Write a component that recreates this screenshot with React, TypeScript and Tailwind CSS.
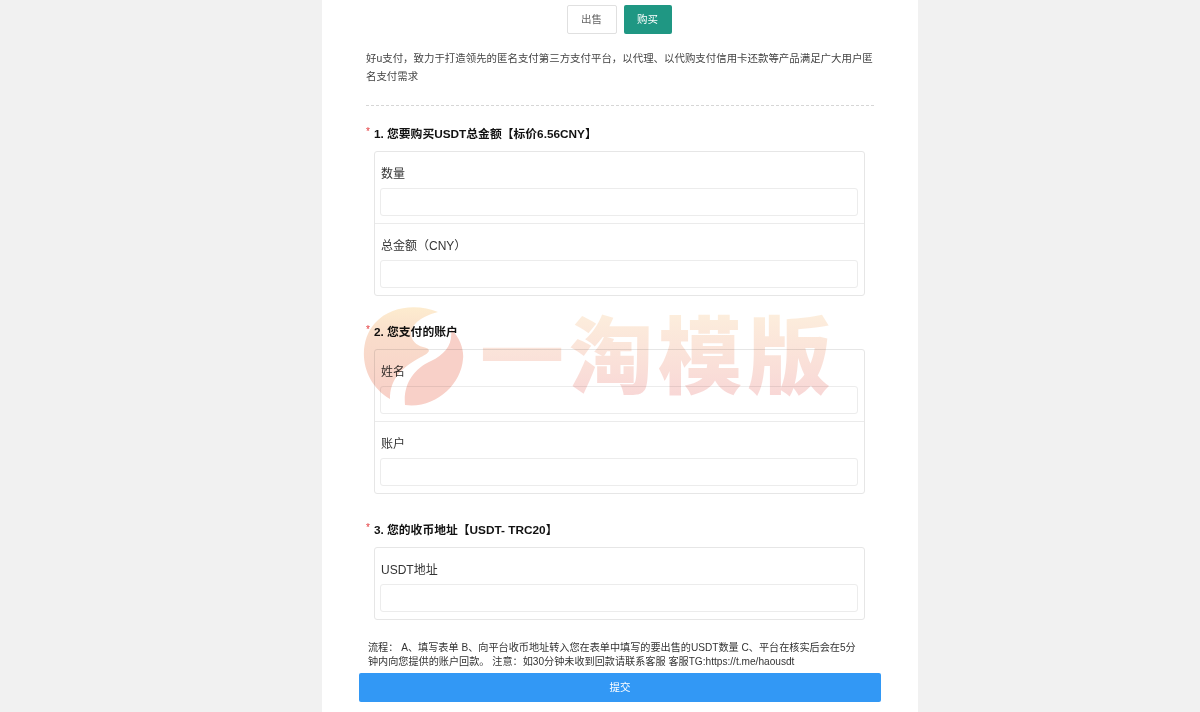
const font = { fontFamily: '"Liberation Sans", "Noto Sans CJK SC", sans-serif' };

function Field({ label, top }: { label: string; top?: boolean }) {
  return (
    <div className={top ? "h-[71px] pl-[5px] pr-[6px] pt-[13px]" : "h-[72px] border-t border-[#ebebeb] pl-[5px] pr-[6px] pt-[13px]"}>
      <div className="h-[23px] pl-px text-[12px] leading-[18px] text-[#333]">{label}</div>
      <div className="h-[28px] rounded-[3px] border border-[#ececec] bg-white" />
    </div>
  );
}

function Question({ title, className, children }: { title: string; className: string; children: React.ReactNode }) {
  return (
    <section className={className}>
      <h2 className="flex h-[18px] items-center text-[11.8px] font-bold leading-[18px] text-[#111]">
        <span className="mr-[4px] mt-[-4px] text-[10px] font-normal text-[#e4393c]">*</span>
        {title}
      </h2>
      <div className="ml-[8px] mt-[8px] w-[491px] rounded-[3px] border border-[#e6e6e6] bg-white">{children}</div>
    </section>
  );
}

export default function App() {
  return (
    <div className="relative flex h-[712px] justify-center overflow-hidden bg-[#f1f1f1]" style={font}>
      <main className="ml-[40px] h-[712px] w-[596px] bg-white pl-[44px]">
        <div className="flex justify-center gap-[7px] pr-[46px] pt-[5px]">
          <button className="h-[29px] w-[50px] rounded-[2px] border border-[#e0e0e0] bg-white text-[10.5px] text-[#666]">出售</button>
          <button className="h-[29px] w-[48px] rounded-[2px] bg-[#1f9783] text-[10.5px] text-white">购买</button>
        </div>
        <p className="mt-[16px] w-[508px] text-[10.45px] leading-[18px] text-[#444]">
          好u支付，致力于打造领先的匿名支付第三方支付平台，以代理、以代购支付信用卡还款等产品满足广大用户匿名支付需求
        </p>
        <div className="mt-[19px] w-[508px] border-t border-dashed border-[#d6d6d6]" />
        <Question title="1. 您要购买USDT总金额【标价6.56CNY】" className="mt-[19px]">
          <Field label="数量" top />
          <Field label="总金额（CNY）" />
        </Question>
        <Question title="2. 您支付的账户" className="mt-[27px]">
          <Field label="姓名" top />
          <Field label="账户" />
        </Question>
        <Question title="3. 您的收币地址【USDT- TRC20】" className="mt-[27px]">
          <Field label="USDT地址" top />
        </Question>
        <p className="ml-[2px] mt-[21px] w-[492px] text-[10.15px] leading-[14px] text-[#333]">
          流程： A、填写表单 B、向平台收币地址转入您在表单中填写的要出售的USDT数量 C、平台在核实后会在5分钟内向您提供的账户回款。 注意：如30分钟未收到回款请联系客服 客服TG:https://t.me/haousdt
        </p>
        <button className="ml-[-7px] mt-[4px] block h-[29px] w-[522px] rounded-[2px] bg-[#3298f5] text-[10.5px] text-white">提交</button>
      </main>
      <div className="pointer-events-none absolute left-[363px] top-[307px] flex items-center mix-blend-multiply">
        <svg width="101" height="100" viewBox="0 0 101 100" className="shrink-0">
          <defs>
            <linearGradient id="wm" x1="0" y1="0" x2="0" y2="1">
              <stop offset="0" stopColor="#fdeccf" />
              <stop offset="0.35" stopColor="#f9dccb" />
              <stop offset="1" stopColor="#f8d0c8" />
            </linearGradient>
          </defs>
          <path d="M75 5C56 -3 28 -2 12 16C-6 36 -3 74 27 92C27 74 36 62 58 50C66 46 70 42 60 40C44 36 40 14 75 5Z" fill="url(#wm)" />
          <path d="M42 98C40 78 50 62 68 54C82 47 90 38 88 22C98 32 101 44 100 52C98 78 72 102 42 98Z" fill="#f8d0c8" />
        </svg>
        <span
          className="ml-[16px] mt-[-12px] whitespace-nowrap bg-linear-to-b from-[#fdf1dd] to-[#f8d6d6] bg-clip-text text-[84px] font-black leading-[100px] tracking-[5px] text-transparent"
          style={{ fontFamily: '"Noto Sans CJK SC", sans-serif' }}
        >
          一淘模版
        </span>
      </div>
    </div>
  );
}
